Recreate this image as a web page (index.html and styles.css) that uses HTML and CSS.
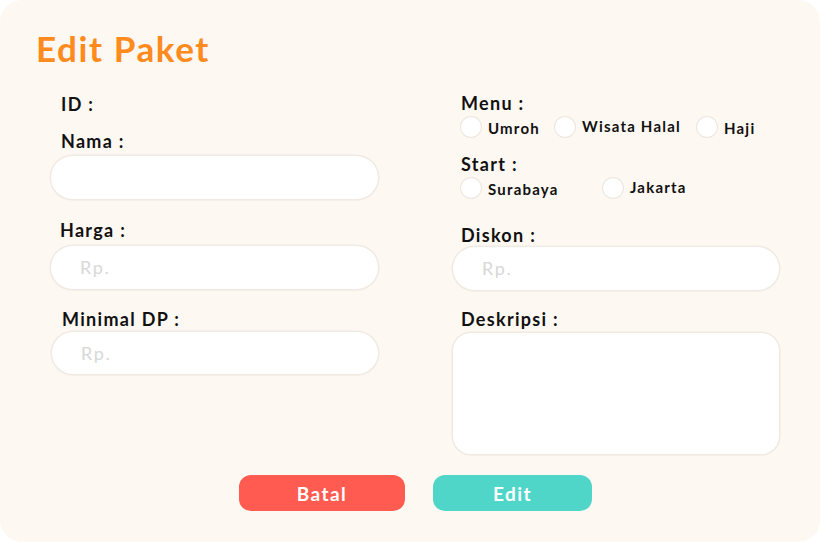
FILE: index.html
```html
<!DOCTYPE html>
<html>
<head>
<meta charset="utf-8">
<link rel="stylesheet" href="styles.css">
</head>
<body>
<div class="card">
  <h1 class="title">Edit Paket</h1>
  <div class="cols">
    <div class="col left">
      <div class="label l-id">ID :</div>
      <div class="label l-nama">Nama :</div>
      <div class="input in-nama"></div>
      <div class="label l-harga">Harga :</div>
      <div class="input in-harga"><span class="ph">Rp.</span></div>
      <div class="label l-dp">Minimal DP :</div>
      <div class="input in-dp"><span class="ph">Rp.</span></div>
    </div>
    <div class="col right">
      <div class="label l-menu">Menu :</div>
      <div class="radios r-menu">
        <span class="opt o-umroh"><span class="radio"></span><span class="rl">Umroh</span></span>
        <span class="opt o-wisata"><span class="radio"></span><span class="rl">Wisata Halal</span></span>
        <span class="opt o-haji"><span class="radio"></span><span class="rl">Haji</span></span>
      </div>
      <div class="label l-start">Start :</div>
      <div class="radios r-start">
        <span class="opt o-sby"><span class="radio"></span><span class="rl">Surabaya</span></span>
        <span class="opt o-jkt"><span class="radio"></span><span class="rl">Jakarta</span></span>
      </div>
      <div class="label l-diskon">Diskon :</div>
      <div class="input in-diskon"><span class="ph">Rp.</span></div>
      <div class="label l-desk">Deskripsi :</div>
      <div class="textarea"></div>
    </div>
  </div>
  <div class="actions">
    <button class="btn batal">Batal</button>
    <button class="btn edit">Edit</button>
  </div>
</div>
</body>
</html>
```
FILE: styles.css
```css
* { box-sizing: border-box; }
html, body { margin: 0; padding: 0; background: #ffffff; }
body { font-family: "Lato", "Noto Sans", sans-serif; color: #111; }
.card {
  width: 820px;
  height: 542px;
  background: #fdf8f2;
  border-radius: 22px;
  padding: 28px 0 0 0;
  display: flex;
  flex-direction: column;
}
.title {
  margin: 0 0 0 36px;
  font-size: 35px;
  font-weight: 700;
  color: #ff8a1d;
  line-height: 40px;
  letter-spacing: 1.6px;
}
.cols {
  display: grid;
  grid-template-columns: 327px 326px;
  column-gap: 75px;
  margin-left: 51px;
  margin-top: 25px;
  align-items: start;
}
.col { display: flex; flex-direction: column; }
.label {
  font-size: 18px;
  font-weight: 700;
  line-height: 22px;
  height: 22px;
  letter-spacing: 1.3px;
}
.left .label { padding-left: 10px; }
.right .label { padding-left: 8px; }
.input {
  height: 43px;
  background: #fff;
  border-radius: 22px;
  box-shadow: 0 0 0 1.5px #f0eae3, 0 1px 3px rgba(0,0,0,0.05);
  display: flex;
  align-items: center;
  padding-left: 29px;
}
.ph { color: #d8d8d8; font-size: 18px; font-weight: 400; letter-spacing: 1.6px; }
.l-nama { margin-top: 15px; }
.in-nama { margin-top: 3.5px; }
.l-harga { margin-top: 20.5px; padding-left: 9px !important; }
.in-harga { margin-top: 4.5px; margin-left: 0; }
.l-dp { margin-top: 19.5px; padding-left: 11px !important; }
.in-dp { margin-top: 1.5px; margin-left: 1px; height: 42px; }

.right { margin-top: -1px; }
.radios { display: flex; margin-left: 8px; margin-top: 2px; height: 22px; }
.opt { display: flex; align-items: center; font-size: 15px; font-weight: 700; letter-spacing: 1.2px; }
.radio {
  width: 20px; height: 20px; border-radius: 50%;
  background: #fff;
  box-shadow: 0 0 0 1px #ece6df;
  margin-right: 7px;
  flex-shrink: 0;
}
.o-umroh .rl, .o-haji .rl, .o-sby .rl { position: relative; top: 1px; }
.o-wisata .rl, .o-jkt .rl { position: relative; top: -1px; }
.r-menu .o-umroh { width: 94px; }
.r-menu .o-wisata { width: 142px; }
.r-start .o-sby { width: 142px; }
.l-start { margin-top: 15px; }
.l-diskon { margin-top: 25px; }
.in-diskon { margin-top: 0.5px; }
.l-desk { margin-top: 18.5px; }
.textarea {
  margin-top: 3px;
  height: 121px;
  background: #fff;
  border-radius: 18px;
  box-shadow: 0 0 0 1.5px #f0eae3, 0 1px 3px rgba(0,0,0,0.05);
}
.actions {
  display: flex;
  margin-left: 239px;
  margin-top: 21px;
  gap: 28px;
}
.btn {
  border: none;
  height: 36px;
  border-radius: 12px;
  color: #fff;
  font-family: inherit;
  font-size: 19px;
  font-weight: 700;
  letter-spacing: 1.4px;
  padding: 0;
}
.batal { width: 166px; background: #ff5b50; }
.edit { width: 159px; background: #50d6c8; }
```
